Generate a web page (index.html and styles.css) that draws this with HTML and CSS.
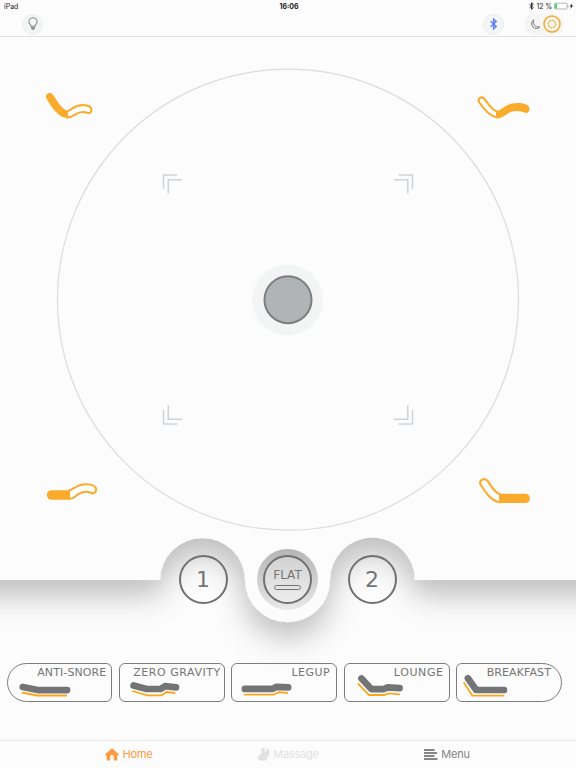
FILE: index.html
```
<!DOCTYPE html>
<html lang="en">
<head>
    <meta charset="UTF-8">
    <meta name="viewport" content="width=device-width, initial-scale=1.0">
    <title>Bed Remote</title>
    <link rel="stylesheet" href="styles.css">
</head>

<body>

    <header>
        <div class="status">
            <span class="device">iPad</span>
            <span class="time">16:06</span>
            <span class="power">
                <svg width="5" height="8" viewBox="0 0 5 8"><path d="M.5 2.2 4.3 5.6 2.5 7.3V.7L4.3 2.4.5 5.8" fill="none" stroke="#222" stroke-width=".9"/></svg>
                <span class="percent">12 %</span>
                <svg width="20" height="8" viewBox="0 0 20 8">
                    <rect x=".5" y="1.2" width="12.6" height="5.8" rx="1" fill="none" stroke="#999" stroke-width=".7"/>
                    <rect x="1" y="1.7" width="2" height="4.8" fill="#4cd964"/>
                    <path d="M14 3.200v2" stroke="#999" stroke-width=".8"/>
                    <path d="M18.300 1.300 15.600 4.600h1.500L16.300 7l2.800-3.400h-1.500z" fill="#222"/>
                </svg>
            </span>
        </div>
        <div class="toolbar">
            <button class="round light">
                <svg width="20" height="20" viewBox="0 0 20 20">
                    <path d="M8.100 12.300C8 10.800 5.900 9.900 5.900 7.900a4.100 4.100 0 0 1 8.200 0c0 2-2.100 2.900-2.200 4.400z" fill="none" stroke="#8c8c8c" stroke-width="1.100"/>
                    <path d="M7.900 12.500h4.200v2l-1.200 1.500H9.100l-1.200-1.500z" fill="#999"/>
                </svg>
            </button>
            <button class="round bluetooth">
                <svg width="20" height="20" viewBox="0 0 20 20"><path d="M6.600 7.300 12.200 12.500 9.600 14.800V5.200L12.200 7.500 6.600 12.700" fill="none" stroke="#6482f8" stroke-width="1.500"/></svg>
            </button>
            <div class="theme">
                <svg width="11" height="11" viewBox="0 0 11 11"><path d="M3.800.8A4.700 4.700 0 1 0 9.900 7.800 5 5 0 0 1 3.800.8z" fill="none" stroke="#777" stroke-width="1"/></svg>
                <svg width="18" height="18" viewBox="0 0 18 18" fill="none" stroke="#f9a72b">
                    <circle cx="9" cy="9" r="8" stroke-width="1.500"/>
                    <circle cx="9" cy="9" r="3.500" stroke-width=".8"/>
                    <circle cx="9" cy="9" r="4.300" stroke-width="1" stroke-dasharray="1 2.377"/>
                </svg>
            </div>
        </div>
    </header>

    <section class="pad">
        <svg width="576" height="500" viewBox="0 37 576 500">
            <circle class="track" cx="288" cy="299.700" r="230.500"/>

            <!-- corner arrows -->
            <g class="arrows">
                <path d="M163.500 188.800V175h13.700M168.300 193.500v-13.800h13.700"/>
                <path d="M412.500 188.800V175h-13.700M407.800 193.500v-13.800H394"/>
                <path d="M163.500 410v14h13.700M168.300 405.300v14H182"/>
                <path d="M412.500 410v14h-13.700M407.800 405.300v14H394"/>
            </g>

            <circle cx="287.500" cy="300" r="35.500" fill="#f3f5f5"/>
            <circle class="knob" cx="288" cy="299.700" r="23.500"/>

            <!-- head up -->
            <path class="full" d="M46.300 98.200C51 106.500 58 117.500 67.200 118v-7C60.500 108 56.500 99.500 52.800 94.600c-3-3.800-8.400-.4-6.500 3.600z"/>
            <path class="hollow" d="M67 111.600c6-2.600 8-6.800 16-6.500 4.500.1 8.400 1.300 8.400 4.700 0 2.800-1.800 3.900-3.900 3-5-1.700-8-1.200-12 1.600-3 2.100-4.500 3.100-8.500 3z"/>

            <!-- legs up -->
            <path class="hollow" d="M479.400 102.500c4.800 7.200 10.300 14.100 17.600 14.700v-5.700c-5.500-1.800-8.700-7.700-12.200-12.200-3.200-4-7.800-.6-5.400 3.200z"/>
            <path class="full" d="M497 111.300c6-3 10-8.300 21-8.300 7 0 11.500 2.200 11.500 5.700 0 3.300-2.400 4.900-5.200 3.900-6-2.400-12-2.100-17.800 1.900-3 2.200-6 4-9.500 4z"/>

            <!-- legs down -->
            <path class="full" d="M69 490.200H51.600a4.800 4.800 0 0 0 0 9.600H69z"/>
            <path class="hollow" d="M69 490.800c6-3 8.500-6.600 17-6.600 6 0 10.100 2.100 10.100 5.300 0 3.500-2.600 4.400-5.100 3.300-5-2-9-1.500-13.500 1.800-3.200 2.400-4.200 4.400-8.500 4.400z"/>

            <!-- head down -->
            <path class="hollow" d="M480.800 485c5 7.500 10.700 16.500 19.200 17.200v-7.800c-6-2.200-8.300-7.500-12.200-13.200-3.200-4.400-9.500-1-7 3.800z"/>
            <path class="full" d="M500 493.700h25.300a4.700 4.700 0 0 1 0 9.400H500z"/>
        </svg>
    </section>

    <section class="memory">
        <svg class="edge" width="576" height="120" viewBox="0 537 576 120">
            <defs>
                <filter id="shadow" filterUnits="userSpaceOnUse" x="-60" y="480" width="696" height="230">
                    <feDropShadow dx="0" dy="15" stdDeviation="15" flood-color="#000" flood-opacity=".25"/>
                </filter>
            </defs>
            <path filter="url(#shadow)" fill="#fcfcfc" d="M-80 400H656V580H415a42.500 42.500 0 0 0-85 0a42.500 42.200 0 0 1-85 0a42.500 42 0 0 0-85 0H-80z"/>
        </svg>
        <button class="slot">1</button>
        <div class="flat">
            <button class="slot">FLAT<span class="bar"></span></button>
        </div>
        <button class="slot">2</button>
    </section>

    <section class="presets">
        <button class="preset first">
            <svg width="103" height="36"><path class="mattress" d="M14.800 22.900 29.600 26.100H59.100"/><path class="base" d="M14 28.500 29 31.500H59"/></svg>
            <span>ANTI-SNORE</span>
        </button>
        <button class="preset gravity">
            <svg width="103" height="36"><path class="mattress" d="M13.600 21.500 26.600 25H40.600L44.900 22.200 56 23.400"/><path class="base" d="M12.200 27 27.600 31.300H41.600L46.600 28 55.300 29"/></svg>
            <span>ZERO GRAVITY</span>
        </button>
        <button class="preset legup">
            <svg width="103" height="36"><path class="mattress" d="M12.900 24.900H40.800L44.200 22.900 56.200 23.400"/><path class="base" d="M11.800 30.700H41.500L46.800 28.200 55.800 29"/></svg>
            <span>LEGUP</span>
        </button>
        <button class="preset lounge">
            <svg width="103" height="36"><path class="mattress" d="M16.500 14.500 26.500 25.200H38.400L42.800 23.400 54.600 24.100"/><path class="base" d="M12.800 19.300 24 31H39.100L43.400 29.300 54.800 30.300"/></svg>
            <span>LOUNGE</span>
        </button>
        <button class="preset last">
            <svg width="103" height="36"><path class="mattress" d="M10.900 14.200 19.200 26H47"/><path class="base" d="M6.700 18.300 15.300 31.700H47.400"/></svg>
            <span>BREAKFAST</span>
        </button>
    </section>

    <nav>
        <a class="active">
            <svg width="14" height="13" viewBox="0 0 14 13"><path d="M7 .3.200 6.300v1h1.500v4.200a1 1 0 0 0 1 1h2.500V8.800a1.800 1.800 0 0 1 3.600 0v3.700h2.500a1 1 0 0 0 1-1V7.300h1.500v-1z" fill="currentColor"/></svg>
            Home
        </a>
        <a class="disabled">
            <svg width="13" height="14" viewBox="0 0 13 14"><path d="M4 3.500C3.500 1.500 5 .3 6.500.7 8 1 8.200 3 7.300 4.400l1 .6.600-2.600 1.100.3-.1-1.600 1 .2.300 1.500 1 .2.300 4.500-2 2.500-1 3.500-6 .3-2.300-1.600L.300 10.300l1.800-.8-.5-1.200 2.200-.2-.6-1.400 1.800-1z" fill="currentColor"/></svg>
            Massage
        </a>
        <a>
            <svg width="14" height="11" viewBox="0 0 14 11"><path d="M0 1h10.500M0 4h13M0 7h10.500M0 10h13.500" stroke="currentColor" stroke-width="1.900"/></svg>
            Menu
        </a>
    </nav>

</body>
</html>
```

FILE: styles.css
```
* {
    box-sizing: border-box;
}
body {
    display: flex;
    flex-direction: column;
    width: 576px;
    height: 768px;
    margin: 0;
    overflow: hidden;
    background-color: #fcfcfc;
    color: #222;
    font-family: Inter, "Liberation Sans", sans-serif;
}
svg {
    display: block;
    flex: none;
}
button {
    padding: 0;
    border: none;
    background: none;
    font-family: "DejaVu Sans", sans-serif;
    color: #757575;
}
header {
    height: 37px;
    border-bottom: 1px solid #e0e1e2;
}
.status {
    display: grid;
    grid-template-columns: 1fr auto 1fr;
    align-items: center;
    height: 12px;
    padding: 0 2px 0 4px;
    font-size: 7px;
}
.time {
    font-size: 7px;
    font-weight: 700;
}
.power {
    display: flex;
    justify-content: flex-end;
    align-items: center;
    gap: 2px;
}
.percent {
    letter-spacing: -0.1px;
}
.toolbar {
    display: flex;
    align-items: center;
    height: 24px;
    padding: 0 12px 0 22px;
}
.round {
    display: flex;
    align-items: center;
    justify-content: center;
    width: 21px;
    height: 21px;
    border: 1px solid #ebecec;
    border-radius: 50%;
    background: #f4f6f6;
}
.bluetooth {
    margin-left: auto;
    margin-right: 20px;
}
.theme {
    display: flex;
    align-items: center;
    justify-content: space-between;
    width: 40px;
    height: 21px;
    padding: 0 3px 0 6px;
    border-radius: 11px;
    background: #f4f6f6;
}
.pad {
    position: relative;
    z-index: 1;
    height: 500px;
}
.track {
    fill: none;
    stroke: #dcdcdd;
    stroke-width: 1.2;
}
.arrows {
    fill: none;
    stroke: #cfd2d5;
    stroke-width: 1.5;
}
.knob {
    fill: #b0b4b5;
    stroke: #7c7e7f;
    stroke-width: 2;
}
.full {
    fill: #fbab2c;
}
.hollow {
    fill: #fff;
    stroke: #fbab2c;
    stroke-width: 2.1;
}
.memory {
    position: relative;
    z-index: 0;
    display: flex;
    justify-content: center;
    align-items: center;
    gap: 29.5px;
    height: 120px;
    padding-bottom: 36px;
    padding-right: 1px;
}
/* panel edge sits behind the buttons */
.edge {
    position: absolute;
    top: 0;
    left: 0;
    z-index: -1;
    overflow: visible;
}
.slot {
    display: flex;
    flex-direction: column;
    align-items: center;
    justify-content: center;
    width: 49px;
    height: 49px;
    padding-top: 2px;
    border: 2px solid #707070;
    border-radius: 50%;
    font-size: 22px;
    line-height: 26px;
}
.flat {
    display: flex;
    align-items: center;
    justify-content: center;
    width: 61px;
    height: 61px;
    border-radius: 50%;
    background: linear-gradient(#b5b5b5, #e9e9e9);
}
.flat .slot {
    padding-top: 0;
    background: linear-gradient(#d2d2d2, #ededed);
    font-size: 12px;
    line-height: 14px;
}
.bar {
    width: 27px;
    height: 5px;
    margin-top: 3px;
    border: 1px solid #757575;
    border-radius: 3px;
}
.presets {
    position: relative;
    display: grid;
    grid-template-columns: repeat(5, 1fr);
    gap: 6.5px;
    margin-top: 6px;
    padding: 0 14px 0 6.5px;
}
.preset {
    display: grid;
    height: 39px;
    border: 1px solid #7c7c7c;
    border-radius: 6px;
}
.preset svg,
.preset span {
    grid-area: 1 / 1;
}
.preset span {
    justify-self: end;
    padding: 2px 5px 0 0;
    font-size: 11px;
    line-height: 13px;
    letter-spacing: 0.1px;
}
.preset.gravity span {
    padding-right: 3px;
    letter-spacing: 0.55px;
}
.preset.legup span {
    padding-right: 6px;
    letter-spacing: 0.5px;
}
.preset.lounge span {
    letter-spacing: 0.6px;
}
.preset.last span {
    padding-right: 10px;
}
.first {
    border-radius: 20px 6px 6px 20px;
}
.last {
    border-radius: 6px 20px 20px 6px;
}
.mattress {
    fill: none;
    stroke: #737475;
    stroke-width: 6.7;
    stroke-linecap: round;
    stroke-linejoin: round;
}
.base {
    fill: none;
    stroke: #faa61a;
    stroke-width: 1.8;
}
nav {
    display: grid;
    grid-template-columns: repeat(3, 159px);
    justify-content: center;
    height: 28px;
    margin-top: auto;
    padding-bottom: 1px;
    border-top: 1px solid #e8e8e8;
    font-size: 11px;
    letter-spacing: -0.2px;
    color: #858585;
}
nav a {
    display: flex;
    align-items: center;
    justify-content: center;
    gap: 3px;
}
.active {
    color: #fd9a3e;
}
.disabled {
    color: #e2e2e2;
}
```
